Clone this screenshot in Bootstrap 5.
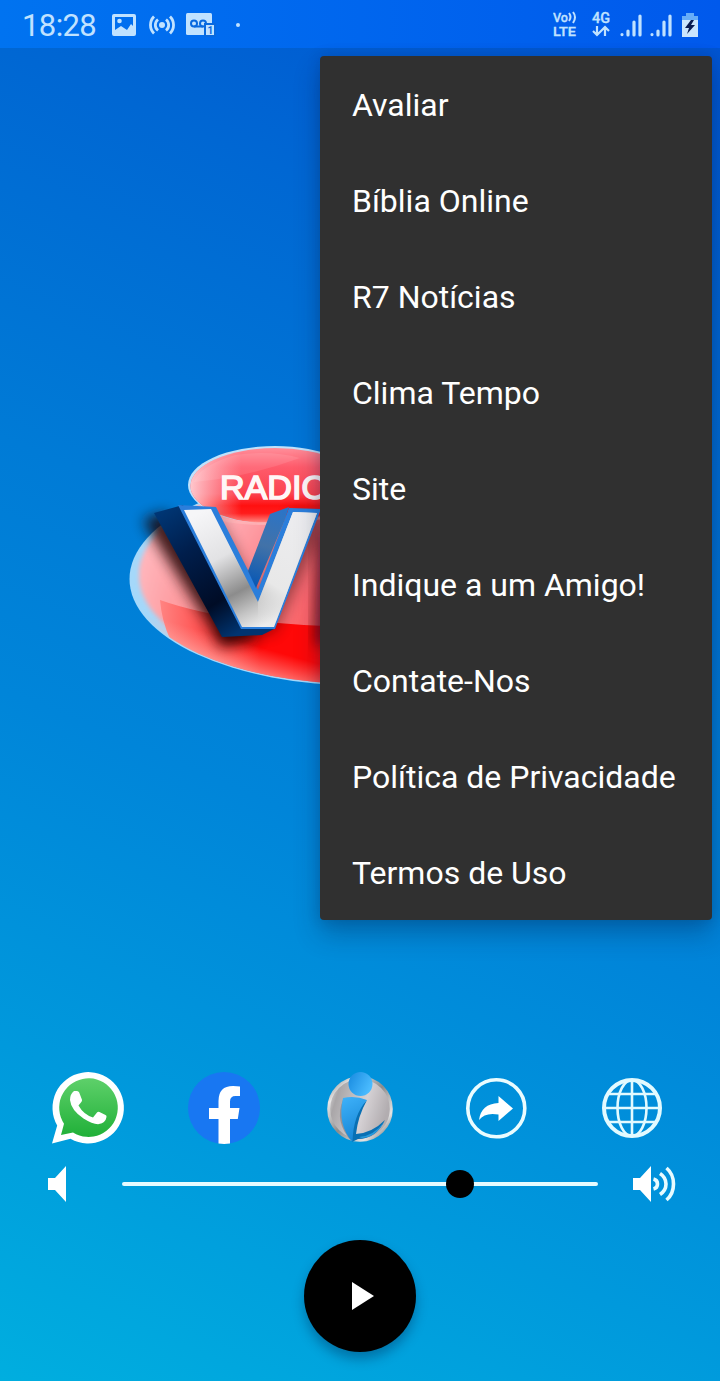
<!DOCTYPE html>
<html lang="pt-BR">
<head>
<meta charset="utf-8">
<meta name="viewport" content="width=device-width, initial-scale=1">
<title>Rádio</title>
<link href="https://cdn.jsdelivr.net/npm/bootstrap@5.3.0/dist/css/bootstrap.min.css" rel="stylesheet">
<style>
  body { font-family: Roboto, "Liberation Sans", sans-serif; margin: 0; }
  .player { width: 720px; height: 1381px; background: linear-gradient(203deg, #0052d2 0%, #0067d3 21%, #007bd6 44%, #0085d9 59%, #0099dc 80%, #00aedf 100%); }
  .status-bar { height: 48px; background: linear-gradient(90deg, #0073f0, #0059ec); color: #c0e2ff; padding: 0 22px; }
  .status-bar svg { display: block; flex: none; margin-top: 2px; }
  .clock { font-size: 31px; line-height: 48px; letter-spacing: -.6px; width: 90px; padding-top: 3px; }
  .stage { height: 1024px; padding-top: 382px; }
  .overflow-menu { top: 56px; right: 8px; left: auto; width: 392px; padding: 0; margin: 0; border: 0; border-radius: 4px; background: #303030; box-shadow: 0 14px 26px rgba(0,30,70,.3), 0 0 14px rgba(0,20,60,.16); }
  .overflow-menu .dropdown-item { height: 96px; line-height: 98px; padding: 0 32px; font-size: 32px; color: #fff; }
  .shortcuts { padding: 0 20px; height: 72px; }
  .shortcuts svg { overflow: visible; }
  .volume-row { height: 80px; padding: 0 44px 0 48px; }
  .volume-row > * { flex: none; }
  .track { width: 476px; height: 4px; border-radius: 2px; background: #e6fbff; margin-left: 56px; }
  .thumb { width: 28px; height: 28px; top: 50%; background: #000; }
  .play-btn { width: 112px; height: 112px; margin-top: 16px; background: #000; box-shadow: 0 7px 12px rgba(0,30,70,.35); }
</style>
</head>
<body>
<div class="player position-relative overflow-hidden d-flex flex-column">
  <header class="status-bar d-flex align-items-center">
    <span class="clock">18:28</span>
    <svg width="24" height="22" viewBox="0 0 24 22"><path fill="currentColor" fill-rule="evenodd" d="M2 0h20a2 2 0 0 1 2 2v18a2 2 0 0 1-2 2H2a2 2 0 0 1-2-2V2a2 2 0 0 1 2-2zm1 3v13l6-4 6 4 4-6 2 2V3z"/><circle cx="7.500" cy="7" r="2.300" fill="currentColor"/></svg>
    <svg width="26" height="22" viewBox="0 0 26 22" fill="none" stroke="currentColor" stroke-width="2.800" style="margin-left:13px"><circle cx="13" cy="11" r="3" fill="currentColor" stroke="none"/><path d="M9 5.500a7 7 0 0 0 0 11M17 5.500a7 7 0 0 1 0 11M5 2.500a12 12 0 0 0 0 17M21 2.500a12 12 0 0 1 0 17"/></svg>
    <svg width="30" height="24" viewBox="0 0 30 24" style="margin-left:11px"><rect width="26" height="22" rx="1.500" fill="currentColor"/><g fill="none" stroke="#0869df" stroke-width="2"><circle cx="8" cy="10.500" r="3"/><circle cx="17" cy="10.500" r="3"/><path d="M8 13.500h9"/></g><path d="M19 11h10v12H19z" fill="currentColor" stroke="#0869df" stroke-width="2"/><text x="21.500" y="21" font-size="10" font-weight="700" fill="#0869df">1</text></svg>
    <svg width="4" height="4" style="margin-left:20px"><circle cx="2" cy="2" r="2" fill="currentColor"/></svg>
    <div class="ms-auto d-flex align-items-center">
      <svg width="24" height="28" viewBox="0 0 24 28" fill="currentColor" font-weight="500" stroke="currentColor" stroke-width=".3"><text x="0" y="10.500" font-size="12.500" textLength="15" lengthAdjust="spacingAndGlyphs">Vo</text><path d="M16 2q3 4 0 8M20 1q4 5 0 11" fill="none" stroke-width="2"/><text x="0" y="24.500" font-size="12.500" textLength="23" lengthAdjust="spacingAndGlyphs">LTE</text></svg>
      <svg width="20" height="28" viewBox="0 0 20 28" fill="currentColor" style="margin-left:14px"><text x="1" y="12" font-size="14" font-weight="500" textLength="18" lengthAdjust="spacingAndGlyphs" stroke="currentColor" stroke-width=".3">4G</text><path d="M6 15v8.500M2 20l4 4 4-4M14 25v-8.500M10 20l4-4 4 4" fill="none" stroke="currentColor" stroke-width="2.200"/></svg>
      <svg width="24" height="24" viewBox="0 0 24 24" style="margin-left:8px" stroke="currentColor" stroke-width="3.200" stroke-linecap="round"><path d="M3 21.500v.1M9 18v4M15 9v13M21 3v19"/></svg>
      <svg width="24" height="24" viewBox="0 0 24 24" style="margin-left:6px" stroke="currentColor" stroke-width="3.200" stroke-linecap="round"><path d="M3 21.500v.1M9 18v4M15 9v13M21 3v19"/></svg>
      <svg width="16" height="24" viewBox="0 0 16 24" style="margin-left:9px"><path d="M4 0h8v3h4v5H0V3h4z" fill="#66adf8"/><path d="M0 7h16v17H0z" fill="#cbe6fd"/><path d="M9 7l-6 8h4l-2 6 8-9H9l3-5z" fill="#0a1c50"/></svg>
    </div>
  </header>

  <main class="stage d-flex justify-content-center align-items-start">
    <svg width="480" height="270" viewBox="110 430 480 270" style="margin-left:-20px">
      <defs>
        <linearGradient id="big" x1="0" y1="510" x2="0" y2="685" gradientUnits="userSpaceOnUse"><stop offset="0" stop-color="#ffb6c0"/><stop offset=".5" stop-color="#fd8c92"/><stop offset=".8" stop-color="#ff8480"/><stop offset="1" stop-color="#ffc8c2"/></linearGradient>
        <linearGradient id="swoosh" x1="155" y1="600" x2="260" y2="600" gradientUnits="userSpaceOnUse"><stop offset="0" stop-color="#ff8a88"/><stop offset="1" stop-color="#ff0808"/></linearGradient>
        <linearGradient id="lowglow" x1="160" y1="618" x2="148" y2="660" gradientUnits="userSpaceOnUse" gradientTransform="translate(40 12)"><stop offset="0" stop-color="#ffb0aa" stop-opacity="0"/><stop offset="1" stop-color="#ffd4cf"/></linearGradient>
        <linearGradient id="small" x1="0" y1="448" x2="0" y2="524" gradientUnits="userSpaceOnUse"><stop offset="0" stop-color="#ff8e9a"/><stop offset=".25" stop-color="#ff5b6b"/><stop offset=".6" stop-color="#fb4350"/><stop offset=".76" stop-color="#ff1010"/><stop offset=".86" stop-color="#ff1c1c"/><stop offset="1" stop-color="#ff9a94"/></linearGradient>
        <linearGradient id="sideglow"><stop offset="0" stop-color="#ffd5da" stop-opacity=".9"/><stop offset=".3" stop-color="#ffc0c8" stop-opacity="0"/></linearGradient>
        <linearGradient id="bigside" x1="130" y1="0" x2="350" y2="0" gradientUnits="userSpaceOnUse"><stop offset="0" stop-color="#ffc6cc" stop-opacity=".8"/><stop offset=".45" stop-color="#ff9090" stop-opacity=".2"/><stop offset=".7" stop-color="#f84850" stop-opacity=".4"/><stop offset="1" stop-color="#f83840" stop-opacity=".8"/></linearGradient>
        <linearGradient id="face" x1="195" y1="515" x2="255" y2="630" gradientUnits="userSpaceOnUse"><stop offset="0" stop-color="#f6f6f8"/><stop offset=".38" stop-color="#e2e2e4"/><stop offset=".68" stop-color="#8c8c8c"/><stop offset=".85" stop-color="#c4c4c4"/><stop offset="1" stop-color="#eee"/></linearGradient>
        <linearGradient id="arm" x1="305" y1="510" x2="240" y2="615" gradientUnits="userSpaceOnUse"><stop offset="0" stop-color="#ededf0"/><stop offset=".65" stop-color="#e8e8e8"/><stop offset="1" stop-color="#e0e0e0" stop-opacity="0"/></linearGradient>
        <linearGradient id="depth" x1="155" y1="510" x2="235" y2="635" gradientUnits="userSpaceOnUse"><stop offset="0" stop-color="#003878"/><stop offset=".35" stop-color="#001e4c"/><stop offset=".75" stop-color="#000c26"/><stop offset="1" stop-color="#003470"/></linearGradient>
        <linearGradient id="inner" x1="280" y1="508" x2="255" y2="585" gradientUnits="userSpaceOnUse"><stop offset="0" stop-color="#2a74c8"/><stop offset=".5" stop-color="#4272a8"/><stop offset="1" stop-color="#0958b4"/></linearGradient>
        <filter id="soft" x="-30%" y="-20%" width="160%" height="140%"><feGaussianBlur stdDeviation="7"/></filter>
        <filter id="rim" x="-10%" y="-10%" width="120%" height="120%"><feGaussianBlur stdDeviation="2"/></filter>
        <clipPath id="bigclip"><ellipse cx="360" cy="579" rx="229" ry="105"/></clipPath>
      </defs>
      <ellipse cx="360" cy="579" rx="230.500" ry="106.500" fill="#a5d8fa"/>
      <g clip-path="url(#bigclip)">
        <g filter="url(#rim)"><ellipse cx="367" cy="575" rx="228" ry="106" fill="url(#big)"/><ellipse cx="367" cy="575" rx="228" ry="106" fill="url(#bigside)"/></g>
        <path d="M160 600Q230 625 360 627V700H225Q165 660 160 600z" fill="url(#swoosh)"/>
        <path d="M120 610h240v90H120z" fill="url(#lowglow)"/>
      </g>
      <path d="M185 603A230 106 0 0 0 360 685" fill="none"/>
      <ellipse cx="275" cy="485" rx="87" ry="39" fill="#bfe2fb"/>
      <ellipse cx="275.500" cy="486" rx="85" ry="38" fill="url(#small)"/>
      <ellipse cx="275.500" cy="486" rx="85" ry="38" fill="url(#sideglow)"/>
      <path d="M194 482Q245 478 300 458Q270 450 235 455Q199 466 194 482z" fill="#fff" opacity=".1"/>
      <path d="M215 518Q265 530 330 516" fill="none" stroke="#ffb5b8" stroke-width="3" opacity=".7"/>
      <text x="220" y="498.500" font-family="Liberation Sans, sans-serif" font-size="34" fill="#fff7f7" stroke="#fff7f7" stroke-width="1.600" textLength="108" lengthAdjust="spacingAndGlyphs">RADIO</text>
      <g clip-path="url(#bigclip)"><path d="M215 508L257 594L292 512L330 514L275 632L220 644Z" fill="#240000" opacity=".45" filter="url(#soft)"/></g>
      <path d="M143 520L165 512L250 625L258 638L222 646Z" fill="#1c0000" opacity=".85" filter="url(#soft)"/>
      <path d="M318 535L332 530V645L314 645Z" fill="#500008" opacity=".7" filter="url(#soft)"/>
      <path d="M154 513L183 505L245 627L276 628L262 635L222 637Z" fill="url(#depth)"/>
      <path d="M178 505L216 507L258 590L289 508L321 509L275 629L241 629Z" fill="#2b7edb"/>
      <path d="M289 507L270 514L248 571L256 588L284 522Z" fill="url(#inner)"/>
      <path d="M184 510L211 509L258 602L293 512L317 513L274 627L242 627Z" fill="url(#face)"/>
      <path d="M258 602L293 512L317 513L274 627H258Z" fill="url(#arm)"/>
    </svg>
  </main>

  <nav class="shortcuts row g-0 row-cols-5 text-center">
    <a class="col" href="#" aria-label="WhatsApp"><svg width="72" height="72" viewBox="0 0 72 72"><defs><linearGradient id="wa" x2="0" y2="1"><stop stop-color="#5ed06a"/><stop offset="1" stop-color="#20b038"/></linearGradient></defs><path d="M0 71.500L5.200 53.500A35.700 35.700 0 1 1 18.500 66.800Z" fill="#fff"/><path d="M9 63L12 51.700A29.300 29.300 0 1 1 21 60.500Z" fill="url(#wa)"/><path d="M22 19h3q1.500 0 2.200 1.500l2.700 7q.4 1.200-.4 2.300L26.500 33.500q5 9 14.500 12l4-5q1-1.200 2.500-.6l6 3.200q1.300.7 1 2-1 6-7.500 7-6 .5-15.500-5.500Q19 38 18 28q0-6 4-9z" fill="#fff"/></svg></a>
    <a class="col" href="#" aria-label="Facebook"><svg width="72" height="72" viewBox="0 0 72 72"><circle cx="36" cy="36" r="36" fill="#1877f2"/><path d="M30.500 71.600V47H21V36h9.500v-7Q30.500 14 45 14q4 0 7 .6V24h-4.500Q42 24 42 29.500V36h9.500l-1.700 11H42v24.600q-6 .8-11.500 0z" fill="#fff"/></svg></a>
    <a class="col" href="#" aria-label="Informações"><svg width="72" height="72" viewBox="0 0 72 72"><defs><linearGradient id="silver" x2="1" y2=".3"><stop stop-color="#eee"/><stop offset=".2" stop-color="#a9a6a8"/><stop offset=".65" stop-color="#d5d1d4"/><stop offset="1" stop-color="#b2adb0"/></linearGradient><linearGradient id="ring" x2="1" y2="1"><stop stop-color="#777"/><stop offset=".2" stop-color="#e6e6e6"/><stop offset=".5" stop-color="#8c8c8c"/><stop offset=".78" stop-color="#e4e4e4"/><stop offset="1" stop-color="#555"/></linearGradient><linearGradient id="ball" x2="1" y2=".5"><stop stop-color="#1689df"/><stop offset="1" stop-color="#4bbcff"/></linearGradient><linearGradient id="leaf" x2=".3" y2="1"><stop stop-color="#3fb2fa"/><stop offset="1" stop-color="#1787d6"/></linearGradient></defs><circle cx="36" cy="37" r="31.300" fill="url(#silver)" stroke="url(#ring)" stroke-width="3"/><path d="M19 28q-9 21 8 41z" fill="#807a7d" opacity=".6"/><path d="M43 28Q34 44 32 62Q48 61 61 48Q52 67 34 67L28 70Q25 43 43 28Z" fill="#0870b4"/><path d="M35 65Q50 64 60 50Q52 65 38 66Z" fill="#2a9cdd"/><path d="M19 26Q31 23 43 28Q29 43 28.500 70Q13 53 19 26Z" fill="url(#leaf)"/><circle cx="36.500" cy="12" r="12" fill="url(#ball)"/></svg></a>
    <a class="col" href="#" aria-label="Compartilhar"><svg width="72" height="72" viewBox="0 0 72 72"><circle cx="36.300" cy="36.300" r="28.500" fill="none" stroke="#eafcff" stroke-width="3.600"/><path d="M38.500 24L53 36.500L38.500 49V42.500Q25 40 19 48Q21 32 38.500 31Z" fill="#fff"/></svg></a>
    <a class="col" href="#" aria-label="Site"><svg width="72" height="72" viewBox="0 0 72 72" fill="none" stroke="#e2faff" stroke-width="2.600"><circle cx="36" cy="36" r="28" stroke-width="4"/><ellipse cx="36" cy="36" rx="14.500" ry="28"/><path d="M36 8v56M8 36h56M13 22h46M13 50h46"/></svg></a>
  </nav>

  <section class="volume-row d-flex align-items-center">
    <svg width="18" height="36" viewBox="0 0 18 36"><path d="M0 12h7L18 0v36L7 24H0z" fill="#fff"/></svg>
    <div class="track position-relative"><span class="thumb position-absolute rounded-circle translate-middle" style="left:71%"></span></div>
    <svg width="44" height="36" viewBox="0 0 44 36" style="margin-left:35px"><path d="M0 12h7L18 0v36L7 24H0z" fill="#fff"/><g fill="none" stroke="#e8fbff" stroke-width="3.600"><path d="M20.500 13q4 1 4 5t-4 5M27 7.500q6 4 6 10.500t-6 10.500M33.500 2q7 6 7 16t-7 16"/></g></svg>
  </section>

  <button class="play-btn btn rounded-circle border-0 p-0 mx-auto d-flex align-items-center justify-content-center" aria-label="Reproduzir"><svg width="22" height="28" viewBox="0 0 22 28" style="margin-left:5px"><path d="M0 0l22 14L0 28z" fill="#fff"/></svg></button>

  <div class="dropdown-menu overflow-menu show">
    <a class="dropdown-item" href="#">Avaliar</a>
    <a class="dropdown-item" href="#">Bíblia Online</a>
    <a class="dropdown-item" href="#">R7 Notícias</a>
    <a class="dropdown-item" href="#">Clima Tempo</a>
    <a class="dropdown-item" href="#">Site</a>
    <a class="dropdown-item" href="#">Indique a um Amigo!</a>
    <a class="dropdown-item" href="#">Contate-Nos</a>
    <a class="dropdown-item" href="#">Política de Privacidade</a>
    <a class="dropdown-item" href="#">Termos de Uso</a>
  </div>
</div>
<script src="https://cdn.jsdelivr.net/npm/bootstrap@5.3.0/dist/js/bootstrap.bundle.min.js"></script>
</body>
</html>
